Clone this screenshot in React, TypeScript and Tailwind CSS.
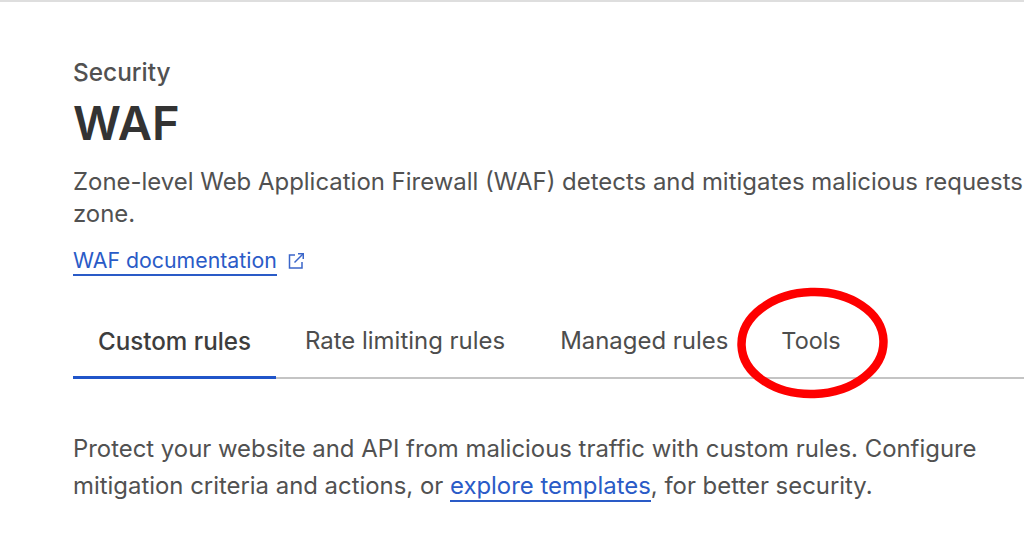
import React from "react";

function ExternalIcon() {
  return (
    <svg width="18" height="18" viewBox="0 0 18 18" fill="none" stroke="#3b66c9" strokeWidth="1.5" className="ml-[10px] -mt-[1px]">
      <path d="M8 3H2.5V16H15V10" />
      <path d="M7.5 10.5L16 2" />
      <path d="M11 1.75H16.25V7" />
    </svg>
  );
}

export default function App() {
  return (
    <div className="relative h-[535px] w-[1024px] overflow-hidden bg-white font-['Inter',sans-serif] text-[#4d4d4d]">
      <div className="h-[2px] bg-[#dedede]" />
      <div className="pl-[73px] pt-[55px]">
        <p className="text-[24.4px] leading-[30px] font-medium text-[#515151]">Security</p>
        <h1 className="mt-[6px] text-[47px] leading-[60px] font-semibold text-[#333333]">WAF</h1>
        <p className="mt-[13px] w-[1000px] text-[23.95px] leading-[32px] whitespace-nowrap text-[#515151]">
          Zone-level Web Application Firewall (WAF) detects and mitigates malicious requests
          <br />
          zone.
        </p>
        <div className="mt-[17px] flex items-center">
          <a className="border-b-2 border-[#2a5bc7] text-[21.3px] leading-[27px] text-[#2a5bc7]">WAF documentation</a>
          <ExternalIcon />
        </div>
        <div className="mt-[31px] flex h-[72px] border-b-2 border-[#c4c4c4] text-[23.95px]">
          <div className="-mb-[2px] flex w-[203px] items-center justify-center border-b-[3px] border-[#2055c9] pt-[1px] text-[24.2px] font-medium text-[#3d3d3d]">Custom rules</div>
          <div className="ml-[29px] flex items-center pb-[2px]">Rate limiting rules</div>
          <div className="ml-[55px] flex items-center pb-[2px]">Managed rules</div>
          <div className="ml-[53px] flex items-center pb-[2px] text-[23.4px]">Tools</div>
        </div>
        <p className="mt-[51px] text-[23.9px] leading-[37px] whitespace-nowrap text-[#515151]">
          Protect your website and API from malicious traffic with custom rules. Configure
          <br />
          mitigation criteria and actions, or{" "}
          <a className="border-b-2 border-[#2a5bc7] text-[#2a5bc7]">explore templates</a>, for better security.
        </p>
      </div>
      <svg width="1024" height="535" viewBox="0 0 1024 535" fill="none" className="pointer-events-none absolute top-0 left-0">
        <ellipse cx="812.5" cy="343" rx="71" ry="51" stroke="#fe0000" strokeWidth="8.5" transform="rotate(-2 812.5 343)" />
      </svg>
    </div>
  );
}
